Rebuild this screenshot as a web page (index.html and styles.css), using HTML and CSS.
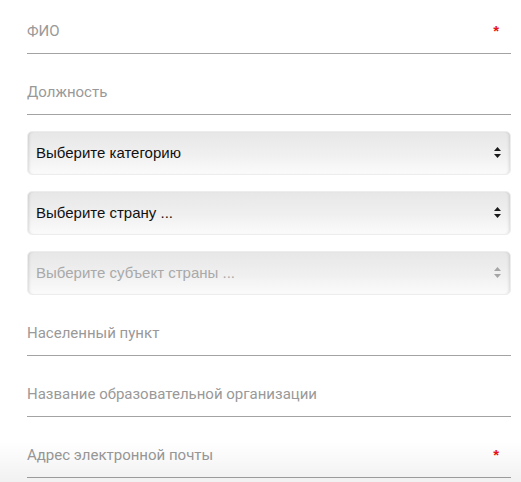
FILE: index.html
```html
<!DOCTYPE html>
<html lang="ru">
<head>
<meta charset="utf-8">
<title>Форма</title>
<link rel="stylesheet" href="styles.css">
</head>
<body>
<form class="form">
  <div class="field"><span class="ph">ФИО</span><span class="req">*</span></div>
  <div class="field"><span class="ph">Должность</span></div>
  <div class="select"><span class="sel-text">Выберите категорию</span>
    <svg class="arrows" width="7" height="11" viewBox="0 0 7 11"><path d="M3.5 0 L7 4 L0 4 Z M0 7 L7 7 L3.5 11 Z"/></svg></div>
  <div class="select"><span class="sel-text">Выберите страну ...</span>
    <svg class="arrows" width="7" height="11" viewBox="0 0 7 11"><path d="M3.5 0 L7 4 L0 4 Z M0 7 L7 7 L3.5 11 Z"/></svg></div>
  <div class="select disabled"><span class="sel-text">Выберите субъект страны ...</span>
    <svg class="arrows" width="7" height="11" viewBox="0 0 7 11"><path d="M3.5 0 L7 4 L0 4 Z M0 7 L7 7 L3.5 11 Z"/></svg></div>
  <div class="field"><span class="ph">Населенный пункт</span></div>
  <div class="field"><span class="ph">Название образовательной организации</span></div>
  <div class="field"><span class="ph">Адрес электронной почты</span><span class="req">*</span></div>
</form>
<div class="fade"></div>
</body>
</html>
```
FILE: styles.css
```css
* { box-sizing: border-box; }
html, body { margin: 0; padding: 0; background: #fff; overflow: hidden; }
body { font-family: "Liberation Sans", Arial, sans-serif; }
.form {
  margin: -7px 0 0 27px;
  width: 484px;
  display: flex;
  flex-direction: column;
}
.field {
  position: relative;
  height: 61px;
  border-bottom: 1px solid #a3a3a3;
  display: flex;
  align-items: flex-end;
  padding-bottom: 13px;
}
.ph {
  font-family: Roboto, "Liberation Sans", Arial, sans-serif;
  font-size: 15px;
  color: #999;
  line-height: 17px;
}
.req {
  position: absolute;
  right: 12px;
  top: 30px;
  color: #e8141c;
  font-size: 15px;
  font-weight: bold;
  line-height: 1;
}
.select {
  margin-top: 16px;
  height: 44px;
  border-radius: 5px;
  border: 1px solid #ededed;
  background: linear-gradient(#e7e7e7, #f0f0f0 55%, #fbfbfb);
  box-shadow: inset 3px 0 3px -2px rgba(0,0,0,0.12), inset -3px 0 3px -2px rgba(0,0,0,0.12);
  display: flex;
  align-items: center;
  justify-content: space-between;
  padding: 0 9px 2px 8px;
}
.sel-text {
  font-size: 15px;
  color: #111;
}
.arrows { fill: #1a1a1a; display: block; }
.disabled .sel-text { color: #a9a9a9; }
.disabled .arrows { fill: #a5a5a5; }
.fade {
  position: fixed;
  left: 0; right: 0; bottom: 0;
  height: 40px;
  background: linear-gradient(rgba(0,0,0,0), rgba(0,0,0,0.055));
  pointer-events: none;
}
```
